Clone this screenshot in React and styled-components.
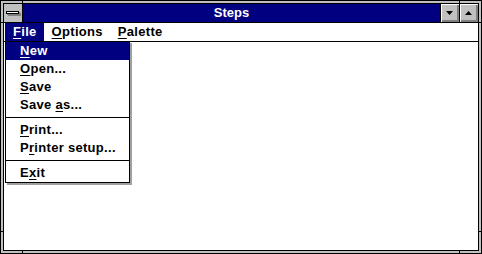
import React from "react";
import styled, { createGlobalStyle } from "styled-components";

const GlobalStyle = createGlobalStyle`
  body {
    margin: 0;
    background: #ffffff;
    font-family: "Liberation Sans", Arial, sans-serif;
  }
`;

const Window = styled.div`
  position: relative;
  width: 482px;
  height: 254px;
  box-sizing: border-box;
  border: 1px solid #000;
  padding: 2px;
  background: #c0c0c0;
`;

const Inner = styled.div`
  position: relative;
  height: 100%;
  box-sizing: border-box;
  border: 1px solid #000;
  display: flex;
  flex-direction: column;
  background: #fff;
`;

const Tick = styled.div`
  position: absolute;
  background: #000;
  ${(p) =>
    p.$vertical
      ? `width: 1px; height: 4px; left: ${p.$at}px; ${p.$edge}: -1px;`
      : `height: 1px; width: 4px; top: ${p.$at}px; ${p.$edge}: -1px;`}
`;

const TitleBar = styled.div`
  display: flex;
  height: 18px;
  background: #000080;
  border-bottom: 1px solid #000;
`;

const SysButton = styled.div`
  width: 18px;
  height: 18px;
  background: #c0c0c0;
  border-right: 1px solid #000;
  display: flex;
  align-items: center;
  justify-content: center;
`;

const SysBar = styled.span`
  display: block;
  width: 11px;
  height: 1px;
  background: #fff;
  border: 1px solid #000;
  box-shadow: 1px 1px 0 #808080, 2px 2px 0 #808080;
  margin: -2px 1px 0 0;
`;

const Title = styled.div`
  flex: 1;
  color: #fff;
  font-weight: bold;
  font-size: 13px;
  line-height: 18px;
  text-align: center;
`;

const CapButton = styled.div`
  width: 19px;
  height: 18px;
  box-sizing: border-box;
  padding-right: 1px;
  background: #c0c0c0;
  border-left: 1px solid #000;
  box-shadow: inset 1px 1px 0 #fff, inset -2px -2px 0 #808080;
  display: flex;
  align-items: center;
  justify-content: center;
`;

const MenuBar = styled.div`
  display: flex;
  height: 18px;
  padding-left: 1px;
  background: #fff;
  border-bottom: 1px solid #000;
`;

const MenuItem = styled.div`
  padding: 0 7px 0 8px;
  font-size: 13px;
  font-weight: bold;
  letter-spacing: 0.3px;
  line-height: 18px;
  color: ${(p) => (p.$active ? "#fff" : "#000")};
  background: ${(p) => (p.$active ? "#000080" : "transparent")};
`;

const Key = styled.span`
  text-decoration: underline;
  text-underline-offset: 2px;
`;

const Client = styled.div`
  flex: 1;
  background: #fff;
`;

const Dropdown = styled.div`
  position: absolute;
  top: 37px;
  left: 1px;
  width: 125px;
  box-sizing: border-box;
  border: 1px solid #000;
  background: #fff;
  box-shadow: 2px 2px 0 #a0a0a0;
`;

const DropItem = styled.div`
  height: 18px;
  padding-left: 14px;
  font-size: 13px;
  font-weight: bold;
  letter-spacing: 0.3px;
  line-height: 18px;
  color: ${(p) => (p.$active ? "#fff" : "#000")};
  background: ${(p) => (p.$active ? "#000080" : "transparent")};
`;

const Separator = styled.div`
  height: 7px;
  display: flex;
  align-items: center;

  &::after {
    content: "";
    flex: 1;
    height: 1px;
    background: #000;
  }
`;

const Arrow = ({ up }) => (
  <svg width="7" height="4" viewBox="0 0 7 4">
    <polygon points={up ? "3.5,0 7,4 0,4" : "0,0 7,0 3.5,4"} fill="#000" />
  </svg>
);

const fileMenu = [
  { pre: "", key: "N", post: "ew", active: true },
  { pre: "", key: "O", post: "pen..." },
  { pre: "", key: "S", post: "ave" },
  { pre: "Save ", key: "a", post: "s..." },
  null,
  { pre: "", key: "P", post: "rint..." },
  { pre: "P", key: "r", post: "inter setup..." },
  null,
  { pre: "E", key: "x", post: "it" },
];

const App = () => {
  return (
    <>
      <GlobalStyle />
      <Window>
        <Tick $vertical $at={21} $edge="top" />
        <Tick $vertical $at={458} $edge="top" />
        <Tick $vertical $at={21} $edge="bottom" />
        <Tick $vertical $at={458} $edge="bottom" />
        <Tick $at={21} $edge="left" />
        <Tick $at={21} $edge="right" />
        <Tick $at={230} $edge="left" />
        <Tick $at={230} $edge="right" />
        <Inner>
          <TitleBar>
            <SysButton>
              <SysBar />
            </SysButton>
            <Title>Steps</Title>
            <CapButton>
              <Arrow />
            </CapButton>
            <CapButton>
              <Arrow up />
            </CapButton>
          </TitleBar>
          <MenuBar>
            <MenuItem $active>
              <Key>F</Key>ile
            </MenuItem>
            <MenuItem>
              <Key>O</Key>ptions
            </MenuItem>
            <MenuItem>
              <Key>P</Key>alette
            </MenuItem>
          </MenuBar>
          <Client />
          <Dropdown>
            {fileMenu.map((item, i) =>
              item ? (
                <DropItem key={i} $active={item.active}>
                  {item.pre}
                  <Key>{item.key}</Key>
                  {item.post}
                </DropItem>
              ) : (
                <Separator key={i} />
              )
            )}
          </Dropdown>
        </Inner>
      </Window>
    </>
  );
};

export default App;
